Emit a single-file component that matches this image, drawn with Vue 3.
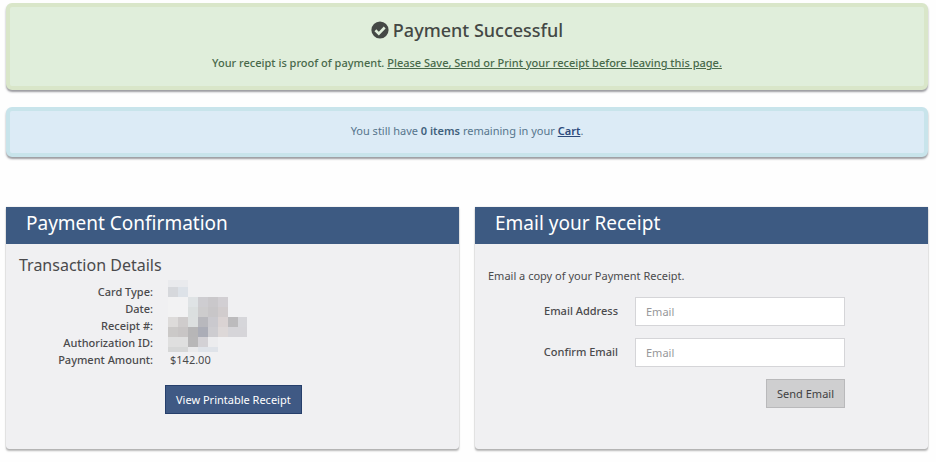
<script setup>
import { ref } from 'vue'

const email = ref('')
const confirmEmail = ref('')

const details = [
  { label: 'Card Type:', value: '' },
  { label: 'Date:', value: '' },
  { label: 'Receipt #:', value: '' },
  { label: 'Authorization ID:', value: '' },
  { label: 'Payment Amount:', value: '$142.00' },
]

// Redaction mosaic: [x, y, width, height, colour]
const mosaic = [
  [0, 0, 20, 7, '#e9eaed'],
  [0, 7, 10, 10, '#d6d8dc'],
  [10, 7, 10, 10, '#dde2e8'],
  [0, 17, 20, 20, '#f2f2f3'],
  [20, 17, 10, 10, '#dfe3e5'],
  [30, 17, 10, 10, '#cecdd1'],
  [40, 17, 10, 10, '#cac8cb'],
  [50, 17, 10, 10, '#d2cfd3'],
  [20, 27, 10, 10, '#dbdfdf'],
  [30, 27, 10, 10, '#cdcccd'],
  [40, 27, 10, 10, '#c8c6c8'],
  [50, 27, 10, 10, '#d1cccd'],
  [0, 37, 10, 10, '#dddbda'],
  [10, 37, 10, 10, '#cfcccc'],
  [20, 37, 10, 10, '#dcdfdf'],
  [30, 37, 10, 10, '#b8b8bd'],
  [40, 37, 10, 10, '#cac9ce'],
  [50, 37, 10, 10, '#dad3d3'],
  [60, 37, 10, 10, '#bcbbbd'],
  [70, 37, 9, 10, '#d6d6da'],
  [0, 47, 10, 10, '#cbc9c8'],
  [10, 47, 10, 10, '#c8c5c5'],
  [20, 47, 10, 10, '#b7b6b7'],
  [30, 47, 10, 10, '#abadb7'],
  [40, 47, 10, 10, '#cdccd0'],
  [50, 47, 10, 10, '#ddd8d8'],
  [60, 47, 19, 10, '#d6d5d9'],
  [0, 57, 20, 10, '#dfdfdf'],
  [20, 57, 10, 10, '#b8b7b8'],
  [30, 57, 10, 10, '#d3d1d5'],
  [40, 57, 10, 10, '#ececee'],
  [0, 67, 20, 5, '#d6d7d7'],
  [20, 67, 10, 5, '#e9e9eb'],
  [30, 67, 20, 5, '#dfe3e9'],
]
</script>

<template>
  <main class="page">
    <section class="alert success">
      <h1>
        <svg class="check" viewBox="0 0 18 18" aria-hidden="true">
          <circle cx="9" cy="9" r="8.6" fill="#444845" />
          <path d="M4.4 9.3 7.8 12.6 13.7 6.5" fill="none" stroke="#e0eedb" stroke-width="2.6" />
        </svg>
        Payment Successful
      </h1>
      <p>Your receipt is proof of payment. <u>Please Save, Send or Print your receipt before leaving this page.</u></p>
    </section>

    <section class="alert info">
      <p>You still have <strong>0 items</strong> remaining in your <a href="#cart">Cart</a>.</p>
    </section>

    <div class="panels">
      <section class="panel">
        <h2>Payment Confirmation</h2>
        <div class="body">
          <h3>Transaction Details</h3>
          <div class="details">
            <table>
              <tbody>
                <tr v-for="row in details" :key="row.label">
                  <th scope="row">{{ row.label }}</th>
                  <td>{{ row.value }}</td>
                </tr>
              </tbody>
            </table>
            <svg class="mosaic" viewBox="0 0 79 72" shape-rendering="crispEdges" aria-hidden="true">
              <rect v-for="(c, i) in mosaic" :key="i" :x="c[0]" :y="c[1]" :width="c[2]" :height="c[3]" :fill="c[4]" />
            </svg>
          </div>
          <button type="button" class="btn primary">View Printable Receipt</button>
        </div>
      </section>

      <section class="panel">
        <h2>Email your Receipt</h2>
        <form class="body" @submit.prevent>
          <p class="intro">Email a copy of your Payment Receipt.</p>
          <div class="field">
            <label for="email">Email Address</label>
            <input id="email" v-model="email" type="email" placeholder="Email" />
          </div>
          <div class="field">
            <label for="confirm">Confirm Email</label>
            <input id="confirm" v-model="confirmEmail" type="email" placeholder="Email" />
          </div>
          <div class="actions">
            <button type="submit" class="btn">Send Email</button>
          </div>
        </form>
      </section>
    </div>
  </main>
</template>

<style>
body {
  background: #fefefe;
}
</style>

<style scoped>
.page {
  padding: 3px 8px 12px 6px;
  font: 11px/17px "Noto Sans", "Open Sans", sans-serif;
  color: #4a4a4c;
}
h1, h2, h3, p {
  margin: 0;
  font-weight: 400;
}
.alert {
  box-sizing: border-box;
  border: 4px solid;
  border-radius: 6px;
  text-align: center;
  box-shadow: 0 2px 2px rgba(60, 60, 70, 0.5);
}
.success {
  padding: 7px 12px 15px;
  border-color: #d9e6c9;
  background: #e0eedb;
  color: #48694a;
}
.success p {
  font-weight: 500;
}
.info {
  margin-top: 17px;
  padding: 11px 12px 14px;
  border-color: #c8e4eb;
  background: #dcebf6;
  color: #56758c;
}
.info strong {
  font-weight: 600;
  color: #3f617c;
}
.info a {
  font-weight: 600;
  color: #2c4a7c;
}
h1 {
  display: flex;
  align-items: center;
  justify-content: center;
  gap: 4px;
  margin-bottom: 8px;
  font-size: 18px;
  line-height: 32px;
  font-weight: 500;
  color: #444845;
}
.check {
  width: 18px;
  height: 18px;
}
.panels {
  display: grid;
  grid-template-columns: 1fr 1fr;
  gap: 16px;
  margin-top: 50px;
}
.panel {
  background: #f0f0f2;
  box-shadow: 0 2px 2px rgba(0, 0, 0, 0.28), 0 0 1px rgba(0, 0, 0, 0.4);
  border-radius: 0 0 3px 3px;
}
h2 {
  padding: 0 20px 4px;
  background: #3d5a82;
  color: #fff;
  font-size: 19px;
  line-height: 33px;
}
.body {
  padding: 9px 13px 35px;
}
h3 {
  font-size: 16px;
  line-height: 24px;
}
.details {
  position: relative;
  margin-top: 6px;
}
table {
  border-collapse: collapse;
}
th, td {
  height: 17px;
  padding: 0;
  line-height: 17px;
}
th {
  width: 134px;
  text-align: right;
  font-weight: 500;
}
td {
  padding-left: 17px;
}
.mosaic {
  position: absolute;
  left: 149px;
  top: -3px;
  width: 79px;
  height: 72px;
}
.btn {
  box-sizing: border-box;
  height: 29px;
  padding: 0 10px;
  border: 1px solid #b9b9bb;
  background: #cfcfd0;
  color: #3f3f42;
  font: inherit;
}
.primary {
  margin: 17px 0 0 146px;
  border-color: #263f6b;
  background: #3f5984;
  color: #fff;
}
.intro {
  margin: 14px 0 13px;
}
.field {
  display: grid;
  grid-template-columns: 130px minmax(0, 210px);
  column-gap: 17px;
  margin-bottom: 12px;
}
label {
  text-align: right;
  line-height: 28px;
  font-weight: 500;
}
input {
  box-sizing: border-box;
  width: 100%;
  height: 29px;
  padding: 0 10px 1px;
  border: 1px solid #d5d5d8;
  background: #fff;
  color: #444;
  font: inherit;
}
input::placeholder {
  color: #97979a;
  opacity: 1;
}
.actions {
  display: flex;
  justify-content: flex-end;
  max-width: 357px;
}
</style>
